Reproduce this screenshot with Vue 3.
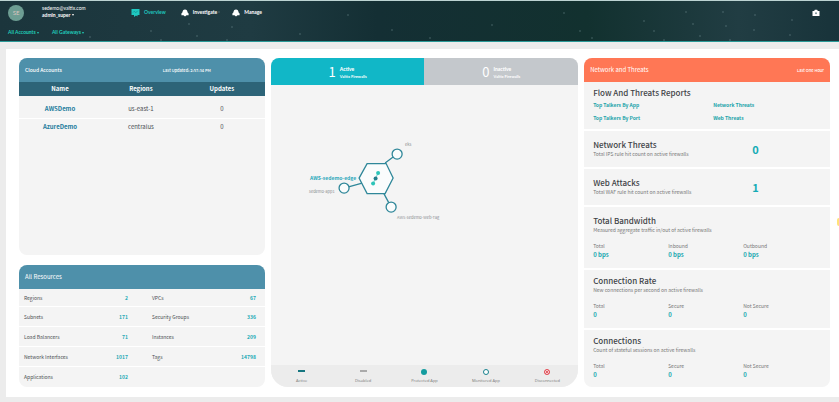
<script setup>
const nav = [
  { name: 'Overview', icon: 'monitor', active: true },
  { name: 'Investigate', icon: 'bell' },
  { name: 'Manage', icon: 'bell' },
]
const filters = ['All Accounts', 'All Gateways']
const stars = [
  [90, 36], [151, 30], [161, 39], [189, 23], [197, 35], [219, 11], [227, 39], [232, 26],
  [300, 33], [348, 14], [392, 29], [430, 37], [492, 24], [564, 12], [580, 30], [592, 37],
  [644, 20], [654, 30], [664, 39], [686, 11], [693, 23], [700, 35], [723, 11], [726, 25],
  [755, 14], [754, 29], [730, 39], [790, 34], [792, 19],
]
const accounts = [
  { name: 'AWSDemo', region: 'us-east-1', updates: 0 },
  { name: 'AzureDemo', region: 'centralus', updates: 0 },
]
const resources = [
  [['Regions', 2], ['VPCs', 67]],
  [['Subnets', 171], ['Security Groups', 336]],
  [['Load Balancers', 71], ['Instances', 209]],
  [['Network Interfaces', 1017], ['Tags', 14798]],
  [['Applications', 102]],
]
const tabs = [
  { count: 1, label: 'Active', active: true },
  { count: 0, label: 'Inactive' },
]
const legend = [
  { label: 'Active', kind: 'dash on' },
  { label: 'Disabled', kind: 'dash off' },
  { label: 'Protected App', kind: 'dot full' },
  { label: 'Monitored App', kind: 'dot ring' },
  { label: 'Disconnected', kind: 'dot target' },
]
const reports = ['Top Talkers By App', 'Network Threats', 'Top Talkers By Port', 'Web Threats']
const counters = [
  { title: 'Network Threats', note: 'Total IPS rule hit count on active firewalls', value: 0 },
  { title: 'Web Attacks', note: 'Total WAF rule hit count on active firewalls', value: 1 },
]
const metrics = [
  {
    title: 'Total Bandwidth',
    note: 'Measured aggregate traffic in/out of active firewalls',
    stats: [['Total', '0 bps'], ['Inbound', '0 bps'], ['Outbound', '0 bps']],
  },
  {
    title: 'Connection Rate',
    note: 'New connections per second on active firewalls',
    stats: [['Total', '0'], ['Secure', '0'], ['Not Secure', '0']],
  },
  {
    title: 'Connections',
    note: 'Count of stateful sessions on active firewalls',
    stats: [['Total', '0'], ['Secure', '0'], ['Not Secure', '0']],
  },
]
</script>

<template>
  <div class="page">
    <header class="top">
      <svg class="stars" viewBox="0 0 839 40" preserveAspectRatio="xMidYMid slice" aria-hidden="true">
        <circle v-for="(s, i) in stars" :key="i" :cx="s[0]" :cy="s[1]" r="1" />
      </svg>
      <div class="top-row">
        <span class="avatar">SE</span>
        <div class="user">
          <span class="email">sedemo@valtix.com</span>
          <button class="role" type="button">admin_super <i class="caret"></i></button>
        </div>
        <nav class="nav">
          <a v-for="n in nav" :key="n.name" href="#" :class="{ active: n.active }">
            <svg v-if="n.icon === 'monitor'" width="9" height="8" viewBox="0 0 9 8" aria-hidden="true">
              <path d="M.5 0h8v6H6.500v1.500L5 6.500 3 8V6H.5z" fill="#1fc8c0" />
              <path d="M2 3.500l1.300-1.300 1.500 1.500 2-2" fill="none" stroke="#12888a" stroke-width=".7" />
            </svg>
            <svg v-else width="8" height="8" viewBox="0 0 8 8" aria-hidden="true">
              <path d="M4 .5C5.600.5 6.500 1.700 6.500 3.200L7.600 4.500v1.700H.4V4.500l1.100-1.300C1.500 1.700 2.400.5 4 .5zM2.500 6.200h3L4 7.600z" fill="#fff" />
            </svg>
            <span>{{ n.name }}</span>
          </a>
        </nav>
        <button class="camera" type="button" aria-label="Snapshot">
          <svg width="8" height="8" viewBox="0 0 8 8" aria-hidden="true">
            <path d="M.5 2h1.700L2.800.8h2.400L5.800 2h1.700v5h-7z" fill="#fff" />
            <circle cx="4" cy="4.300" r="1" fill="#7b9297" />
          </svg>
        </button>
      </div>
      <div class="filters">
        <button v-for="f in filters" :key="f" type="button">{{ f }} <i class="caret"></i></button>
      </div>
    </header>

    <main class="board">
      <div class="column">
        <section class="card accounts">
          <div class="bar blue">
            <h2 class="small">Cloud Accounts</h2>
            <span class="updated">Last Updated: 2:57:34 PM</span>
          </div>
          <table>
            <thead>
              <tr><th>Name</th><th>Regions</th><th>Updates</th></tr>
            </thead>
            <tbody>
              <tr v-for="a in accounts" :key="a.name">
                <td><a href="#">{{ a.name }}</a></td>
                <td>{{ a.region }}</td>
                <td>{{ a.updates }}</td>
              </tr>
            </tbody>
          </table>
        </section>
        <section class="card">
          <div class="bar blue"><h2>All Resources</h2></div>
          <div class="resources">
            <div v-for="(row, i) in resources" :key="i" class="res-row">
              <div v-for="r in row" :key="r[0]" class="res">
                <span>{{ r[0] }}</span><b>{{ r[1] }}</b>
              </div>
            </div>
          </div>
        </section>
      </div>

      <section class="card gateways">
        <div class="tabs">
          <button v-for="t in tabs" :key="t.label" type="button" :class="{ active: t.active }">
            <span class="num">{{ t.count }}</span>
            <span class="cap"><b>{{ t.label }}</b><small>Valtix Firewalls</small></span>
          </button>
        </div>
        <div class="canvas">
          <svg viewBox="0 0 307 240">
            <g fill="#fafcfc" stroke="#2f8799" stroke-width="1.300">
              <path d="M114 78 126 69M73 103 91 98M112 107 120 122" />
              <path d="M96 78.500h19l7 14.500-8 15.500H96L88 93z" />
              <circle cx="126" cy="69" r="5" />
              <circle cx="73" cy="103" r="5" />
              <circle cx="120" cy="122" r="5" />
            </g>
            <path d="M102 98.500 107 88" stroke="#7fd6cf" stroke-width="1" />
            <circle cx="107" cy="88" r="2" fill="#2cc4b8" />
            <circle cx="104.500" cy="93.500" r="2" fill="#227e8c" />
            <circle cx="102" cy="98.500" r="2" fill="#2cc4b8" />
            <text class="edge" x="39" y="95">AWS-sedemo-edge</text>
            <text x="38" y="108">sedemo-app1</text>
            <text x="134" y="61">eks</text>
            <text x="126" y="134">AWS-sedemo-Web-Tag</text>
          </svg>
        </div>
        <ul class="legend">
          <li v-for="l in legend" :key="l.label">
            <i :class="l.kind"></i><span>{{ l.label }}</span>
          </li>
        </ul>
      </section>

      <section class="card threats">
        <div class="bar orange">
          <h2>Network and Threats</h2>
          <span>Last One Hour</span>
        </div>
        <div class="block">
          <h3>Flow And Threats Reports</h3>
          <div class="links"><a v-for="r in reports" :key="r" href="#">{{ r }}</a></div>
        </div>
        <div v-for="c in counters" :key="c.title" class="block counter">
          <div><h3>{{ c.title }}</h3><p>{{ c.note }}</p></div>
          <strong>{{ c.value }}</strong>
        </div>
        <div v-for="m in metrics" :key="m.title" class="block metric">
          <h3>{{ m.title }}</h3>
          <p>{{ m.note }}</p>
          <dl>
            <div v-for="s in m.stats" :key="s[0]"><dt>{{ s[0] }}</dt><dd>{{ s[1] }}</dd></div>
          </dl>
        </div>
      </section>
      <span class="pointer"></span>
    </main>
  </div>
</template>

<style>
body { margin: 0; background: #ececec; }
</style>

<style scoped>
* { box-sizing: border-box; }
.page {
  min-height: 100vh;
  display: flex;
  flex-direction: column;
  font: 6px/8px "Noto Sans CJK JP", "Noto Sans", sans-serif;
  color: #4b4f53;
}
h2, h3, p, dl, dd, ul { margin: 0; padding: 0; }
a { text-decoration: none; color: inherit; }
button { border: 0; padding: 0; background: none; color: inherit; font: inherit; }

.top {
  position: relative;
  height: 42px;
  border-top: 1px solid #bcd3d2;
  border-bottom: 1px solid #2a9a98;
  background: linear-gradient(90deg, #1b353c, #1f3b42 30%, #142f34 45%, #12312f 70%, #213d43 88%, #18333a);
  color: #fff;
  font: 5px/7px Lato, "Noto Sans", sans-serif;
}
.stars { position: absolute; inset: 0; width: 100%; height: 100%; fill: #7f9da0; opacity: .3; }
.top-row { position: relative; display: flex; align-items: center; height: 23px; padding: 0 19px 0 8px; }
.avatar {
  width: 16px; height: 16px; border-radius: 50%;
  background: #6d9d93; color: #d9c4bf;
  display: grid; place-items: center; font-size: 6px;
}
.user { width: 107px; padding: 0 0 2px 18px; display: flex; flex-direction: column; align-items: flex-start; }
.role { font-weight: 700; }
.caret {
  display: inline-block; vertical-align: middle;
  border: 1px solid transparent; border-top: 2px solid currentColor; border-bottom: 0;
}
.nav { display: flex; gap: 15px; font-weight: 700; }
.nav a { display: flex; align-items: center; gap: 4px; }
.nav .active { color: #1fc8c0; }
.camera { margin-left: auto; display: flex; }
.filters { position: relative; display: flex; gap: 13px; padding: 5px 8px; color: #20cdbb; }
.filters button { font-weight: 700; }

.board {
  position: relative;
  flex: 1;
  margin: 7px 0 5px 6px;
  padding: 9px 9px 10px 13px;
  background: #fff;
  display: grid;
  grid-template-columns: 4fr 5fr 4fr;
  gap: 6px;
}
.column { display: flex; flex-direction: column; gap: 10px; }
.card { border-radius: 8px; overflow: hidden; background: #f4f4f4; }
.accounts { flex: 1; }
.bar { height: 24px; padding: 0 6px; display: flex; align-items: center; color: #fff; }
.bar h2 { font-size: 6px; font-weight: 400; }
.bar .small { font-size: 5px; font-weight: 500; }
.blue { background: #4e90aa; }
.orange { background: #ff7755; justify-content: space-between; }
.bar span { font-size: 4px; font-weight: 500; }
.bar .updated { margin-left: auto; margin-right: 48px; }

table { width: 100%; table-layout: fixed; border-collapse: collapse; text-align: center; }
th { height: 14px; padding: 0; background: #2d6478; color: #fff; font-size: 6px; }
td { height: 18px; padding: 0; border-bottom: 1px solid #fff; }
th:nth-child(2), td:nth-child(2) { padding-right: 2px; }
th:nth-child(3), td:nth-child(3) { padding-right: 4px; }
tbody tr:first-child td { height: 22px; padding-top: 4px; }
tbody tr:last-child td { border: 0; }
td a { color: #237c9d; font-weight: 700; }

.res-row { display: grid; grid-template-columns: 1fr 1fr; align-items: center; height: 20px; border-bottom: 1px solid #fff; font-size: 5px; }
.res-row:first-child { height: 18px; }
.res-row:last-child { border: 0; }
.res { display: flex; justify-content: space-between; padding: 0 14px 0 5px; }
.res + .res { padding: 0 9px 0 10px; }
.res b { color: #22a9b4; }

.gateways { display: flex; flex-direction: column; border-radius: 8px 8px 17px 17px; }
.tabs { display: grid; grid-template-columns: 1fr 1fr; height: 27px; color: #fff; }
.tabs button { display: flex; align-items: center; justify-content: center; gap: 4px; background: #c4c8cc; text-align: left; }
.tabs .active { background: #11b7c7; }
.num { font-size: 13px; line-height: 16px; }
.cap { display: flex; flex-direction: column; padding-top: 2px; font: 5px/7px Lato, sans-serif; }
.cap b { font-weight: 900; }
.cap small { font-size: 4px; font-weight: 700; }
.canvas { flex: 1; }
.canvas svg { display: block; width: 100%; }
.canvas text { font-size: 4px; fill: #8b8f92; }
.canvas .edge { font-size: 5px; font-weight: 700; fill: #2aa7ba; }
.legend { display: grid; grid-template-columns: repeat(5, 1fr); height: 22px; background: #ececec; list-style: none; font: 4px/6px "Open Sans", sans-serif; color: #777; }
.legend li { display: flex; flex-direction: column; align-items: center; padding-top: 4px; gap: 3px; }
.dash { width: 7px; height: 2px; margin: 1px 0 3px; }
.on { background: #167680; }
.off { background: #aaa; }
.dot { width: 6px; height: 6px; border-radius: 50%; }
.full { background: #149c9f; }
.ring { border: 1px solid #18828e; background: #fff; }
.target { border: 1px solid #e3525a; background: #d92d38; box-shadow: inset 0 0 0 1px #fff; }

.threats { display: flex; flex-direction: column; }
.block { padding: 5px 9px; border-bottom: 2px solid #fff; height: 49px; }
h3 { font-size: 8px; line-height: 11px; font-weight: 500; color: #3f4347; }
p { font-size: 5px; line-height: 8px; color: #777; }
.links { display: grid; grid-template-columns: 120px 1fr; row-gap: 5px; padding-top: 3px; font-size: 5px; font-weight: 700; color: #20a3a9; }
.counter { height: 38px; padding-top: 8px; display: grid; grid-template-columns: 159px 1fr; }
.counter strong { font-size: 11px; line-height: 20px; color: #14abb5; }
.metric { height: 60px; }
.counter + .metric { height: 63px; padding-top: 8px; }
.block:last-child { height: 57px; border: 0; }
dl { display: grid; grid-template-columns: repeat(3, 75px); padding-top: 8px; }
dt { font-size: 5px; line-height: 8px; color: #777; }
dd { font-size: 6px; line-height: 9px; font-weight: 700; color: #1ba8b0; }
.pointer { position: absolute; right: 0; top: 169px; width: 2px; height: 8px; border-radius: 4px 0 0 4px; background: #ffe27a; }
</style>
